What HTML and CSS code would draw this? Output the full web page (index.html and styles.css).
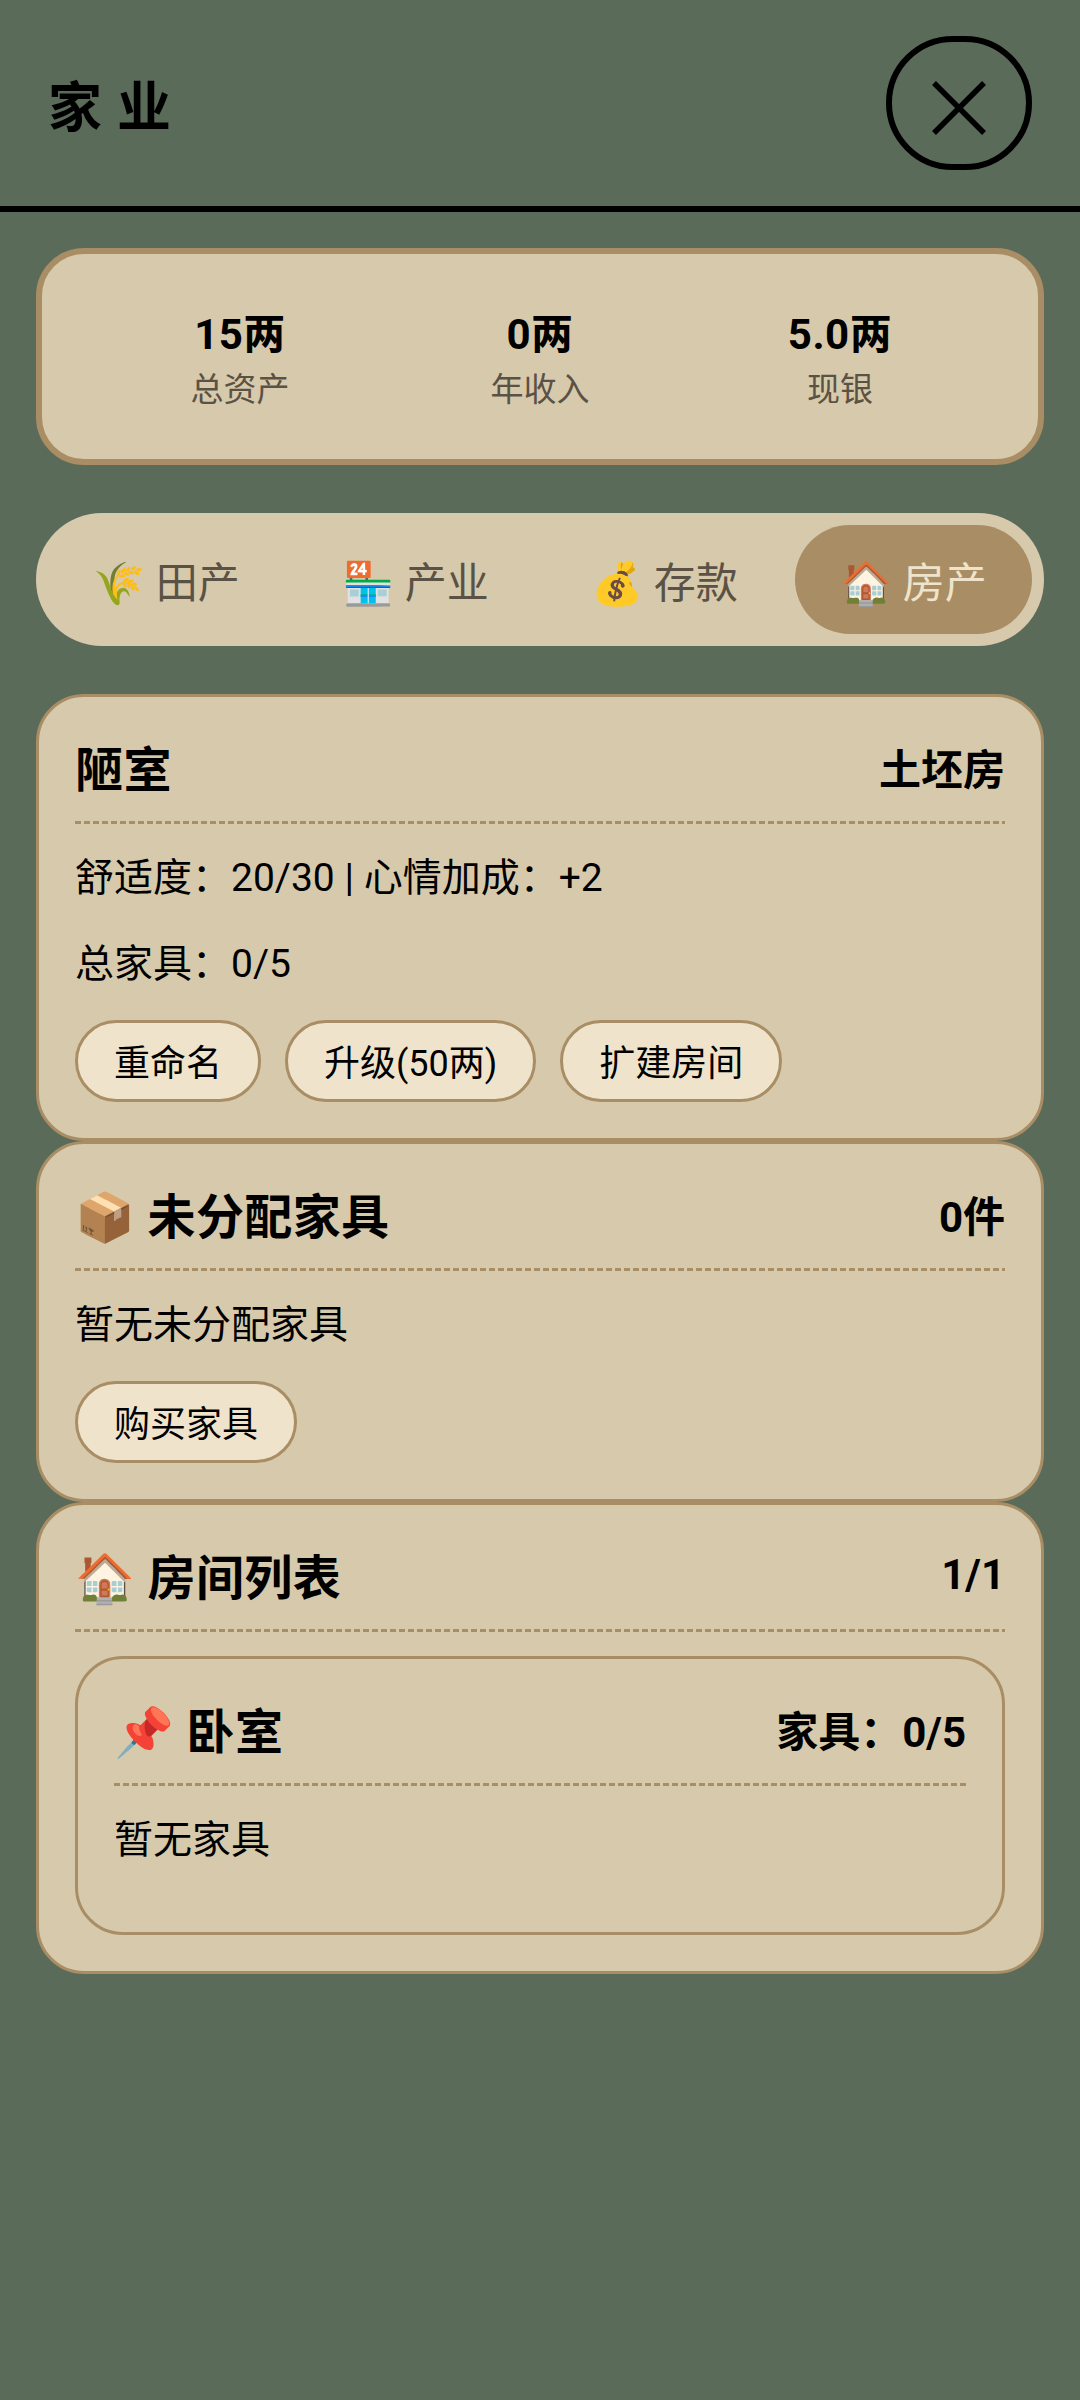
FILE: index.html
```html
<!DOCTYPE html>
<html lang="zh-CN">
<head>
<meta charset="utf-8">
<title>家业</title>
<link rel="stylesheet" href="styles.css">
</head>
<body>
<header class="topbar">
  <h1 class="page-title">家业</h1>
  <button class="close-btn" aria-label="关闭">
    <svg class="close-icon" viewBox="0 0 54 54"><path d="M2 2 L52 52 M52 2 L2 52"/></svg>
  </button>
</header>
<main class="content">
  <section class="stats">
    <div class="stat"><div class="stat-value">15两</div><div class="stat-label">总资产</div></div>
    <div class="stat"><div class="stat-value">0两</div><div class="stat-label">年收入</div></div>
    <div class="stat"><div class="stat-value">5.0两</div><div class="stat-label">现银</div></div>
  </section>
  <nav class="tabs">
    <div class="tab">🌾 田产</div>
    <div class="tab">🏪 产业</div>
    <div class="tab">💰 存款</div>
    <div class="tab active">🏠 房产</div>
  </nav>
  <section class="card">
    <div class="card-head"><h2 class="card-title">陋室</h2><span class="card-side">土坯房</span></div>
    <p class="line">舒适度：20/30 | 心情加成：+2</p>
    <p class="line">总家具：0/5</p>
    <div class="actions">
      <button class="btn">重命名</button>
      <button class="btn">升级(50两)</button>
      <button class="btn">扩建房间</button>
    </div>
  </section>
  <section class="card">
    <div class="card-head"><h2 class="card-title">📦 未分配家具</h2><span class="card-side">0件</span></div>
    <p class="line">暂无未分配家具</p>
    <div class="actions"><button class="btn">购买家具</button></div>
  </section>
  <section class="card">
    <div class="card-head"><h2 class="card-title">🏠 房间列表</h2><span class="card-side">1/1</span></div>
    <article class="room">
      <div class="card-head"><h3 class="card-title">📌 卧室</h3><span class="card-side">家具：0/5</span></div>
      <p class="line">暂无家具</p>
    </article>
  </section>
</main>
</body>
</html>
```
FILE: styles.css
```css
* { box-sizing: border-box; }
html, body { margin: 0; padding: 0; }
body {
  min-height: 2400px;
  background: #5b6b5a;
  color: #000;
  font-family: Roboto, "Noto Sans CJK SC", "Noto Color Emoji", sans-serif;
}
.topbar {
  display: flex;
  justify-content: space-between;
  align-items: center;
  height: 212px;
  padding: 0 48px;
  border-bottom: 6px solid #000;
}
.page-title {
  margin: 0;
  font-size: 54px;
  font-weight: 700;
  letter-spacing: 15px;
}
.close-btn {
  display: flex;
  align-items: center;
  justify-content: center;
  width: 146px;
  height: 134px;
  padding: 9px 0 0;
  background: none;
  border: 6px solid #000;
  border-radius: 72px;
}
.close-icon { width: 54px; height: 54px; }
.close-icon path { fill: none; stroke: #000; stroke-width: 5.5; }
.content { padding: 36px; }
.stats {
  display: grid;
  grid-template-columns: repeat(3, 1fr);
  padding: 48px;
  margin-bottom: 48px;
  background: #d7c9ab;
  border: 6px solid #a98d64;
  border-radius: 48px;
  text-align: center;
}
.stat-value { margin: -2px 0 2px; font-size: 42px; font-weight: 700; letter-spacing: 0.5px; }
.stat-label { font-size: 33px; color: #5a5245; }
.tabs {
  display: flex;
  gap: 12px;
  padding: 12px;
  margin-bottom: 48px;
  background: #d7c9ab;
  border-radius: 66px;
}
.tab {
  flex: 1;
  padding: 24px 0;
  font-size: 42px;
  text-align: center;
  color: #5a5245;
  border-radius: 55px;
}
.tab.active { background: #a98d64; color: #efe4cb; }
.card {
  padding: 36px;
  background: #d7c9ab;
  border: 3px solid #a98d64;
  border-radius: 48px;
}
.card-head {
  display: flex;
  justify-content: space-between;
  align-items: center;
  padding-bottom: 21px;
  margin-bottom: 24px;
  background: repeating-linear-gradient(90deg, #a98d64 0 6px, transparent 6px 9px) left bottom / 100% 3px no-repeat;
}
.card-title { margin: -2px 0 2px; font-size: 48px; font-weight: 700; letter-spacing: 0.4px; }
.card-side { margin: -2px 0 2px; font-size: 42px; font-weight: 700; }
.line { margin: -2px 0 32px; font-size: 39px; }
.actions { display: flex; gap: 24px; }
.btn {
  padding: 11px 36px 13px;
  font: inherit;
  font-size: 36px;
  color: #000;
  background: #efe4cb;
  border: 3px solid #a98d64;
  border-radius: 45px;
}
.room {
  padding: 36px;
  border: 3px solid #a98d64;
  border-radius: 48px;
}
```
